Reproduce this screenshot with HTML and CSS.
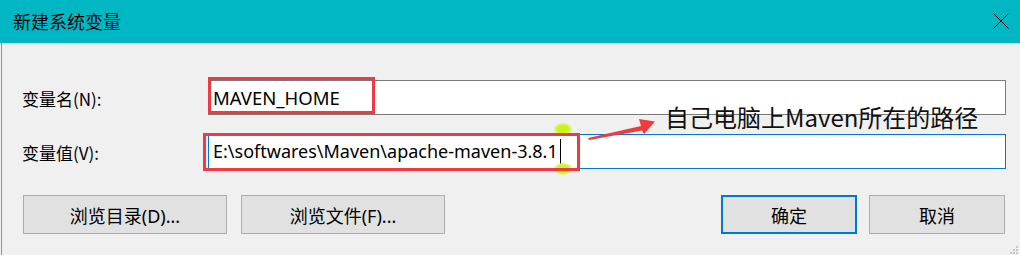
FILE: index.html
```html
<!DOCTYPE html>
<html lang="zh-CN">
<head>
    <meta charset="UTF-8">
    <title>新建系统变量</title>
    <link rel="stylesheet" href="styles.css">
</head>
<body>
    <div class="dialog">
        <div class="titlebar">
            <span class="title">新建系统变量</span>
            <svg class="close" width="16" height="16" viewBox="0 0 16 16">
                <path d="M0.5 0.5 L15.5 15.5 M15.5 0.5 L0.5 15.5" stroke="#000" stroke-width="1" fill="none"/>
            </svg>
        </div>

        <div class="content">
            <div class="field">
                <label>变量名(N):</label>
                <div class="textbox">MAVEN_HOME</div>
                <span class="mark mark-name"></span>
            </div>
            <div class="field">
                <label>变量值(V):</label>
                <div class="textbox focused">E:\softwares\Maven\apache-maven-3.8.1<span class="caret"></span></div>
                <span class="handle handle-top"></span>
                <span class="handle handle-bottom"></span>
                <span class="mark mark-value"></span>
            </div>

            <div class="actions">
                <div class="left-buttons">
                    <button>浏览目录(D)...</button>
                    <button>浏览文件(F)...</button>
                </div>
                <div class="right-buttons">
                    <button class="default">确定</button>
                    <button>取消</button>
                </div>
            </div>
        </div>

        <!-- 标注 -->
        <svg class="arrow" width="80" height="35" viewBox="0 0 80 35">
            <polygon points="8,28 61,16 59,9 75,11.5 64,24 62,20.5 9,30" fill="#ee3b3f"/>
        </svg>
        <div class="note">自己电脑上Maven所在的路径</div>

        <svg class="grip" width="12" height="12" viewBox="0 0 12 12">
            <rect x="9" y="3" width="2" height="2" fill="#c6c6c6"/>
            <rect x="6" y="6" width="2" height="2" fill="#c6c6c6"/>
            <rect x="9" y="6" width="2" height="2" fill="#c6c6c6"/>
            <rect x="3" y="9" width="2" height="2" fill="#c6c6c6"/>
            <rect x="6" y="9" width="2" height="2" fill="#c6c6c6"/>
            <rect x="9" y="9" width="2" height="2" fill="#c6c6c6"/>
        </svg>
    </div>
</body>
</html>
```

FILE: styles.css
```css
body {
    margin: 0;
    font-family: "Noto Sans", "Noto Sans CJK SC", sans-serif;
    color: #000;
}
.dialog {
    position: relative;
    width: 1020px;
    height: 255px;
    background: #f0f0f0;
    overflow: hidden;
}
.titlebar {
    height: 43px;
    background: #00b7c3;
    display: flex;
    align-items: center;
    justify-content: space-between;
    padding: 0 11px 0 13px;
}
.title {
    font-family: "Noto Sans CJK SC", sans-serif;
    font-size: 18px;
    line-height: 20px;
    margin-top: -2px;
}
.close {
    display: block;
    margin-top: -1px;
}
.content {
    border-left: 1px solid #3bb8c2;
    margin-left: 1px;
    height: 212px;
    box-sizing: border-box;
    padding: 37px 14px 0 20px;
    display: flex;
    flex-direction: column;
    gap: 19px;
}
.field {
    position: relative;
    display: grid;
    grid-template-columns: 186px 1fr;
    align-items: center;
}
.field label {
    font-family: "Noto Sans CJK SC", sans-serif;
    font-size: 17px;
    padding-top: 2px;
}
.textbox {
    height: 35px;
    box-sizing: border-box;
    background: #fff;
    border: 1px solid #7a7a7a;
    padding: 0 4px;
    font-size: 18.5px;
    line-height: 33px;
    white-space: nowrap;
    display: flex;
    align-items: center;
}
.textbox.focused {
    border-color: #0078d7;
    font-size: 18px;
}
.caret {
    width: 1px;
    height: 25px;
    background: #000;
    margin-left: 2px;
}
.mark {
    position: absolute;
    border: 3px solid #ee3b3f;
    box-sizing: border-box;
}
.mark-name {
    left: 186px;
    top: -3px;
    width: 167px;
    height: 37px;
}
.mark-value {
    left: 181px;
    top: -1px;
    width: 377px;
    height: 38px;
}
.handle {
    position: absolute;
    left: 532px;
    width: 18px;
    height: 12px;
    border-radius: 50%;
    background: radial-gradient(ellipse at center, #c6f500 40%, #e2f88c 75%);
    opacity: 0.9;
}
.handle-top {
    top: -11px;
}
.handle-bottom {
    top: 29px;
}
.actions {
    margin-top: 7px;
    display: flex;
    justify-content: space-between;
    padding-left: 1px;
}
.left-buttons {
    display: flex;
    gap: 14px;
}
.right-buttons {
    display: flex;
    gap: 12px;
    margin-right: 1px;
}
button {
    height: 39px;
    width: 204px;
    background: #e1e1e1;
    border: 1px solid #adadad;
    font-family: "Noto Sans", "Noto Sans CJK SC", sans-serif;
    font-size: 18px;
    color: #000;
    padding: 0;
}
.right-buttons button {
    width: 136px;
}
button.default {
    border: 2px solid #0078d7;
}
.arrow {
    position: absolute;
    left: 580px;
    top: 110px;
}
.note {
    position: absolute;
    left: 665px;
    top: 100px;
    font-family: "Noto Sans CJK SC", sans-serif;
    font-size: 24px;
    line-height: 34px;
    color: #111;
    white-space: nowrap;
}
.grip {
    position: absolute;
    right: 1px;
    bottom: 0;
}
```
